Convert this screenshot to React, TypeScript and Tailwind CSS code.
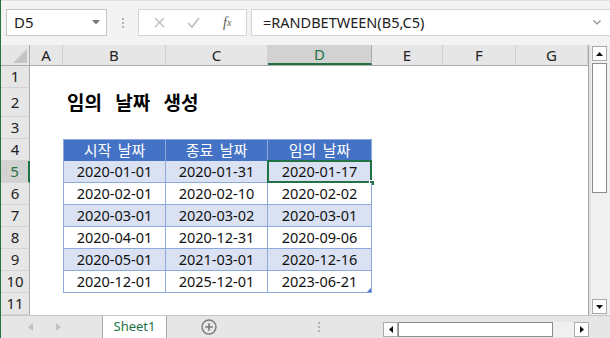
import React from "react";

const UI = "font-['Noto_Sans','Noto_Sans_CJK_KR',sans-serif]";

const cols = [
  { l: "A", w: "w-[33px]" },
  { l: "B", w: "w-[103px]" },
  { l: "C", w: "w-[102px]" },
  { l: "D", w: "w-[104px]" },
  { l: "E", w: "w-[71px]" },
  { l: "F", w: "w-[73px]" },
  { l: "G", w: "w-[72px]" },
];

const data = [
  ["2020-01-01", "2020-01-31", "2020-01-17"],
  ["2020-02-01", "2020-02-10", "2020-02-02"],
  ["2020-03-01", "2020-03-02", "2020-03-01"],
  ["2020-04-01", "2020-12-31", "2020-09-06"],
  ["2020-05-01", "2021-03-01", "2020-12-16"],
  ["2020-12-01", "2025-12-01", "2023-06-21"],
];

function RowHead({ n, h, sel }: { n: number; h: string; sel?: boolean }) {
  return (
    <div
      className={`w-[29px] ${h} shrink-0 flex items-center justify-center text-[15px] border-b border-[#d4d4d4] ${
        sel
          ? "bg-[#d2d2d2] text-[#217346] border-r-2 border-r-[#217346]"
          : "bg-[#e6e6e6] text-[#222] border-r border-r-[#ababab]"
      }`}
    >
      {n}
    </div>
  );
}

function Blank({ w, h }: { w: string; h: string }) {
  return <div className={`${w} ${h} shrink-0 bg-white`} />;
}

export default function App() {
  return (
    <div className={`w-[610px] h-[338px] overflow-hidden bg-[#f3f3f3] border-l border-[#217346] flex flex-col ${UI}`}>
      {/* formula bar */}
      <div className="h-[45px] shrink-0 flex items-start pt-[8px] pl-[5px] border-t border-[#e0e0e0]">
        <div className="w-[101px] h-[27px] bg-white border border-[#c6c6c6] flex items-center pl-[7px] pr-[6px] text-[15px] text-[#222]">
          <span className="flex-1">D5</span>
          <svg width="8" height="5" viewBox="0 0 8 5">
            <path d="M0 0 L8 0 L4 4.5 Z" fill="#7a7a7a" />
          </svg>
        </div>
        <div className="w-[31px] h-[27px] flex flex-col items-center justify-center gap-[2px]">
          <div className="w-[2px] h-[2px] bg-[#b3b3b3]" />
          <div className="w-[2px] h-[2px] bg-[#b3b3b3]" />
          <div className="w-[2px] h-[2px] bg-[#b3b3b3]" />
        </div>
        <div className="w-[109px] h-[27px] bg-white border border-[#d4d4d4] flex items-center">
          <div className="w-[40px] flex justify-center pl-[1px]">
            <svg width="11" height="11" viewBox="0 0 11 11">
              <path d="M1 1 L10 10 M10 1 L1 10" stroke="#bdbdbd" strokeWidth="1.4" />
            </svg>
          </div>
          <div className="w-[30px] flex justify-center">
            <svg width="13" height="11" viewBox="0 0 13 11">
              <path d="M1 6 L5 10 L12 1" stroke="#bdbdbd" strokeWidth="1.6" fill="none" />
            </svg>
          </div>
          <div className="w-[38px] flex justify-center text-[14px] italic text-[#5a5a5a] font-['Liberation_Serif',serif]">
            f<span className="text-[10px] mt-[3px]">x</span>
          </div>
        </div>
        <div className="flex-1 ml-[4px] h-[27px] bg-white border-y border-l border-[#d4d4d4] flex items-center pl-[11px] pr-[9px]">
          <span className="flex-1 text-[14.5px] text-[#222]">=RANDBETWEEN(B5,C5)</span>
          <svg width="8" height="5" viewBox="0 0 8 5">
            <path d="M0.5 0.5 L4 4 L7.5 0.5" stroke="#8a8a8a" strokeWidth="1.2" fill="none" />
          </svg>
        </div>
      </div>

      {/* sheet area */}
      <div className="flex h-[270px] shrink-0">
        <div className="w-[588px] flex flex-col border-r border-[#a6a6a6] bg-white">
          {/* column headers */}
          <div className="flex h-[21px] shrink-0 border-b border-[#ababab]">
            <div className="w-[29px] shrink-0 bg-[#e6e6e6] border-r border-[#ababab] flex items-end justify-end pr-[2px] pb-[2px]">
              <svg width="14" height="14" viewBox="0 0 14 14">
                <path d="M14 0 L14 14 L0 14 Z" fill="#c4c4c4" />
              </svg>
            </div>
            {cols.map((c) =>
              c.l === "D" ? (
                <div
                  key={c.l}
                  className={`${c.w} shrink-0 bg-[#d2d2d2] border-r border-[#ababab] border-b-2 border-b-[#217346] flex items-center justify-center text-[15px] text-[#217346]`}
                >
                  {c.l}
                </div>
              ) : (
                <div
                  key={c.l}
                  className={`${c.w} shrink-0 bg-[#e6e6e6] border-r border-[#d0d0d0] flex items-center justify-center text-[15px] text-[#222]`}
                >
                  {c.l}
                </div>
              )
            )}
          </div>

          {/* row 1 */}
          <div className="flex">
            <RowHead n={1} h="h-[22px]" />
            <Blank w="flex-1" h="h-[22px]" />
          </div>
          {/* row 2 title */}
          <div className="flex">
            <RowHead n={2} h="h-[29px]" />
            <div className="flex-1 h-[29px] bg-white flex items-center pl-[37px]">
              <span className="text-[19px] font-bold text-black [word-spacing:9px] font-['Noto_Sans_CJK_KR',sans-serif]">
                임의 날짜 생성
              </span>
            </div>
          </div>
          {/* row 3 */}
          <div className="flex">
            <RowHead n={3} h="h-[22px]" />
            <Blank w="flex-1" h="h-[22px]" />
          </div>
          {/* row 4 header */}
          <div className="flex">
            <RowHead n={4} h="h-[22px]" />
            <Blank w="w-[33px]" h="h-[22px]" />
            {["시작 날짜", "종료 날짜", "임의 날짜"].map((t, i) => (
              <div
                key={t}
                className={`${i === 0 ? "w-[103px] border-l" : i === 1 ? "w-[102px]" : "w-[104px]"} h-[22px] shrink-0 bg-[#4472c4] border-t border-r border-[#8ea9db] flex items-center justify-center text-[15px] text-white [word-spacing:3px] font-['Noto_Sans_CJK_KR',sans-serif]`}
              >
                {t}
              </div>
            ))}
            <Blank w="flex-1" h="h-[22px]" />
          </div>
          {/* data rows */}
          {data.map((r, ri) => (
            <div className="flex" key={ri}>
              <RowHead n={ri + 5} h="h-[22px]" sel={ri === 0} />
              <Blank w="w-[33px]" h="h-[22px]" />
              {r.map((v, ci) => (
                <div
                  key={ci}
                  className={`${ci === 0 ? "w-[103px] border-l" : ci === 1 ? "w-[102px]" : "w-[104px]"} h-[22px] shrink-0 relative border-r border-b border-[#8ea9db] flex items-center justify-center text-[14.5px] text-[#111] ${
                    ri % 2 === 0 ? "bg-[#d9e1f2]" : "bg-white"
                  }`}
                >
                  {v}
                  {ri === 0 && ci === 2 && (
                    <>
                      <div className="absolute left-[-1px] top-[-1px] right-[-1px] bottom-[-1px] border-2 border-[#217346]" />
                      <div className="absolute right-[-4px] bottom-[-4px] w-[6px] h-[6px] bg-[#217346] border border-white" />
                    </>
                  )}
                  {ri === 5 && ci === 2 && (
                    <svg className="absolute right-[0px] bottom-[0px]" width="4" height="4" viewBox="0 0 4 4">
                      <path d="M4 0 L4 4 L0 4 Z" fill="#4472c4" />
                    </svg>
                  )}
                </div>
              ))}
              <Blank w="flex-1" h="h-[22px]" />
            </div>
          ))}
          {/* row 11 */}
          <div className="flex">
            <RowHead n={11} h="h-[22px]" />
            <Blank w="flex-1" h="h-[22px]" />
          </div>
        </div>

        {/* vertical scrollbar */}
        <div className="w-[21px] bg-[#f0f0f0] border-l-2 border-[#e2e2e2] flex flex-col pt-[1px] pl-[1px] pb-[1px]">
          <div className="w-[15px] h-[15px] bg-white border border-[#ababab] flex items-center justify-center">
            <svg width="7" height="4" viewBox="0 0 7 4">
              <path d="M0 4 L3.5 0 L7 4 Z" fill="#111" />
            </svg>
          </div>
          <div className="w-[15px] h-[130px] mt-[2px] bg-white border border-[#8c8c8c]" />
          <div className="flex-1" />
          <div className="w-[15px] h-[15px] bg-white border border-[#ababab] flex items-center justify-center">
            <svg width="7" height="4" viewBox="0 0 7 4">
              <path d="M0 0 L3.5 4 L7 0 Z" fill="#111" />
            </svg>
          </div>
        </div>
      </div>

      {/* bottom sheet tabs bar */}
      <div className="flex-1 flex items-stretch bg-[#e6e6e6] border-t border-[#c6c6c6]">
        <div className="w-[101px] flex items-center pl-[27px] gap-[23px]">
          <svg width="5" height="8" viewBox="0 0 5 8">
            <path d="M5 0 L0 4 L5 8 Z" fill="#c2c2c2" />
          </svg>
          <svg width="5" height="8" viewBox="0 0 5 8">
            <path d="M0 0 L5 4 L0 8 Z" fill="#c2c2c2" />
          </svg>
        </div>
        <div className="w-[65px] bg-white border-x border-[#ababab] flex items-center justify-center text-[13px] text-[#217346]">
          Sheet1
        </div>
        <div className="w-[84px] flex items-center justify-center">
          <svg width="16" height="16" viewBox="0 0 16 16">
            <circle cx="8" cy="8" r="7" stroke="#7a7a7a" strokeWidth="1.4" fill="none" />
            <path d="M8 4.3 V11.7 M4.3 8 H11.7" stroke="#7a7a7a" strokeWidth="1.6" />
          </svg>
        </div>
        <div className="w-[132px] flex flex-col items-center justify-center gap-[2px] pl-[3px]">
          <div className="w-[2px] h-[2px] bg-[#b3b3b3]" />
          <div className="w-[2px] h-[2px] bg-[#b3b3b3]" />
          <div className="w-[2px] h-[2px] bg-[#b3b3b3]" />
        </div>
        <div className="flex items-start pt-[6px]">
          <div className="w-[15px] h-[15px] bg-white border border-[#ababab] flex items-center justify-center">
            <svg width="4" height="7" viewBox="0 0 4 7">
              <path d="M4 0 L0 3.5 L4 7 Z" fill="#111" />
            </svg>
          </div>
          <div className="w-[155px] h-[15px] bg-white border border-[#8c8c8c]" />
          <div className="w-[21px] h-[15px] bg-[#f0f0f0]" />
          <div className="w-[15px] h-[15px] bg-white border border-[#ababab] flex items-center justify-center">
            <svg width="4" height="7" viewBox="0 0 4 7">
              <path d="M0 0 L4 3.5 L0 7 Z" fill="#111" />
            </svg>
          </div>
        </div>
      </div>
    </div>
  );
}
